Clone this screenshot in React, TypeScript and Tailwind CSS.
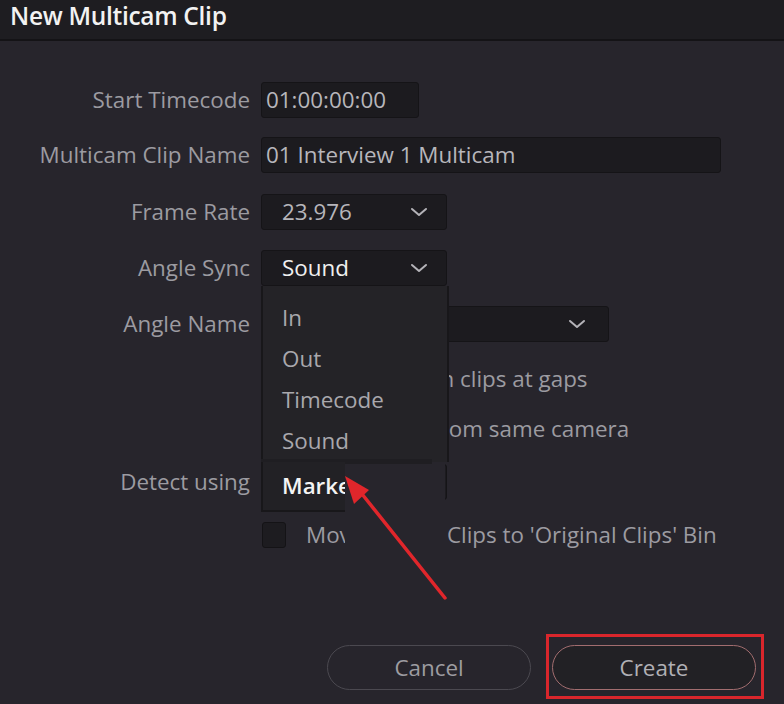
import React from "react";

const font = { fontFamily: '"Open Sans", "Noto Sans", sans-serif' };

function Chevron({ className = "" }: { className?: string }) {
    return (
        <svg className={className} width="18" height="10" viewBox="0 0 18 10" fill="none" stroke="#b4b3b8" strokeWidth="2" strokeLinecap="round" strokeLinejoin="round">
            <polyline points="2,2 9,8 16,2" />
        </svg>
    );
}

function Label({ children }: { children: React.ReactNode }) {
    return <div className="w-[250px] shrink-0 text-right text-[22.4px] text-[#9c9ba1] whitespace-nowrap">{children}</div>;
}

function Field({ width, children }: { width: string; children: React.ReactNode }) {
    return (
        <div className={`${width} h-[36px] ml-[11px] flex items-center justify-between rounded-[3px] border border-[#151417] bg-[#1c1b1f] pl-[4px] pr-[18px] text-[22.4px] text-[#b7b6bb] whitespace-nowrap`}>
            {children}
        </div>
    );
}

function Check({ children }: { children: React.ReactNode }) {
    return (
        <div className="flex items-center h-[36px] pl-[262px]">
            <div className="w-[24px] h-[26px] rounded-[3px] border border-[#141316] bg-[#1d1c20]" />
            <span className="ml-[20px] text-[22.4px] text-[#9c9ba1] whitespace-pre">{children}</span>
        </div>
    );
}

export default function App() {
    const items = ["In", "Out", "Timecode", "Sound"];
    return (
        <div className="relative w-[784px] h-[704px] overflow-hidden bg-[#27252c]" style={font}>
            {/* title bar */}
            <div className="h-[41px] bg-[#1e1d21] border-b-2 border-[#141316] flex items-start pl-[10px]">
                <span className="text-[24.5px] font-semibold text-[#f2f2f2] leading-[31px] tracking-[-0.3px]">New Multicam Clip</span>
            </div>

            <div className="flex flex-col pt-[41px]">
                <div className="flex items-center">
                    <Label>Start Timecode</Label>
                    <Field width="w-[158px]">
                        <span>01:00:00:00</span>
                    </Field>
                </div>
                <div className="flex items-center mt-[19px]">
                    <Label>Multicam Clip Name</Label>
                    <Field width="w-[460px]">
                        <span>01 Interview 1 Multicam</span>
                    </Field>
                </div>
                <div className="flex items-center mt-[21px]">
                    <Label>Frame Rate</Label>
                    <Field width="w-[186px]">
                        <span className="pl-[16px]">23.976</span>
                        <Chevron />
                    </Field>
                </div>
                <div className="flex items-center mt-[20px]">
                    <Label>Angle Sync</Label>
                    <Field width="w-[186px]">
                        <span className="pl-[16px] text-[#f0f0f0]">Sound</span>
                        <Chevron />
                    </Field>
                </div>
                <div className="flex items-center mt-[20px]">
                    <Label>Angle Name</Label>
                    <Field width="w-[348px]">
                        <span className="pl-[16px]">Clip Name</span>
                        <Chevron className="mr-[4px]" />
                    </Field>
                </div>
                <div className="mt-[19px]">
                    <Check>{"Combine Own clips at gaps"}</Check>
                </div>
                <div className="mt-[14px]">
                    <Check>{"Detect clips from same camera"}</Check>
                </div>
                <div className="flex items-center mt-[17px]">
                    <Label>Detect using</Label>
                    <Field width="w-[186px]">
                        <span className="pl-[16px]">Camera #</span>
                        <Chevron />
                    </Field>
                </div>
                <div className="mt-[17px]">
                    <Check>{"Move Source Clips to 'Original Clips' Bin"}</Check>
                </div>

                {/* buttons */}
                <div className="flex items-center mt-[92px] pl-[327px] gap-[21px]">
                    <div className="w-[204px] h-[45px] rounded-full border-[1.5px] border-[#4b4950] flex items-center justify-center text-[22.4px] text-[#9d9ca1]">
                        Cancel
                    </div>
                    <div className="w-[204px] h-[45px] rounded-full border-[1.5px] border-[#a26d6f] bg-[#222125] flex items-center justify-center text-[22.4px] text-[#b1b0b5]">
                        Create
                    </div>
                </div>
            </div>

            {/* dropdown menu */}
            <div className="absolute left-[261px] top-[286px] w-[188px] h-[176px] bg-[#242327] border-x-2 border-[#18171a] pt-[11px]">
                {items.map((it) => (
                    <div key={it} className="h-[41px] flex items-center pl-[19px] text-[22.4px] text-[#a9a8ad]">
                        {it}
                    </div>
                ))}
            </div>
            {/* capture glitch: cut-off part of the menu */}
            <div className="absolute left-[345px] top-[462px] w-[100px] h-[92px] bg-[#27252c]" />
            <div className="absolute left-[261px] top-[459px] w-[171px] h-[5px] bg-[#1f1e22]" />
            <div className="absolute left-[261px] top-[462px] w-[84px] h-[50px] bg-[#222125] border-l-2 border-b-2 border-[#18171a] flex items-center pl-[19px] overflow-hidden">
                <span className="text-[22.4px] font-semibold text-[#f4f4f4] whitespace-nowrap">Marker</span>
            </div>

            {/* annotation arrow */}
            <svg className="absolute inset-0 pointer-events-none" width="784" height="704" viewBox="0 0 784 704">
                <line x1="445" y1="598" x2="362" y2="494" stroke="#e0262b" strokeWidth="3.5" strokeLinecap="round" />
                <polygon points="345,476 369,490 354,504" fill="#e0262b" />
            </svg>

            {/* highlight box */}
            <div className="absolute left-[546px] top-[634px] w-[218px] h-[65px] border-[3px] border-[#d9262c]" />
        </div>
    );
}
